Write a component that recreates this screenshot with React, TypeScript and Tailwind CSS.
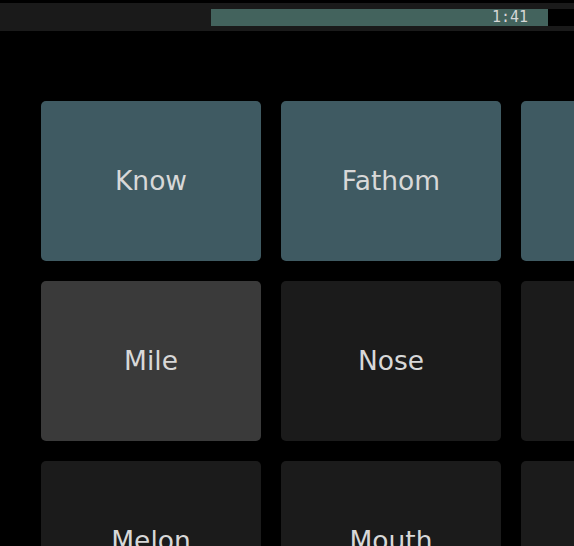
import React from "react";

const cards = [
  { label: "Know", tone: "bg-[#3f5a62]" },
  { label: "Fathom", tone: "bg-[#3f5a62]" },
  { label: "", tone: "bg-[#3f5a62]" },
  { label: "Mile", tone: "bg-[#3a3a3a]" },
  { label: "Nose", tone: "bg-[#1b1b1b]" },
  { label: "", tone: "bg-[#1b1b1b]" },
  { label: "Melon", tone: "bg-[#1b1b1b]" },
  { label: "Mouth", tone: "bg-[#1b1b1b]" },
  { label: "", tone: "bg-[#1b1b1b]" },
];

export default function App() {
  return (
    <div className="h-[546px] w-[574px] overflow-hidden bg-black pt-[3px] font-['DejaVu_Sans',sans-serif]">
      {/* timer strip */}
      <div className="flex h-[28px] items-center bg-[#1a1a1a] pl-[211px]">
        <div className="flex h-[17px] w-[400px] shrink-0 bg-black">
          <div className="flex w-[337px] items-center justify-end bg-[#43635d] pr-[20px]">
            <span className="font-['DejaVu_Sans_Mono',monospace] text-[15px] leading-none text-[#d6d6d6]">
              1:41
            </span>
          </div>
        </div>
      </div>

      <div className="grid w-[720px] grid-cols-[220px_220px_220px] gap-[20px] pl-[41px] pt-[70px]">
        {cards.map((c, i) => (
          <div
            key={i}
            className={`flex h-[160px] items-center justify-center rounded-[5px] pb-[1px] ${c.tone} text-[26.5px] text-[#d8d8d8]`}
          >
            {c.label}
          </div>
        ))}
      </div>
    </div>
  );
}
